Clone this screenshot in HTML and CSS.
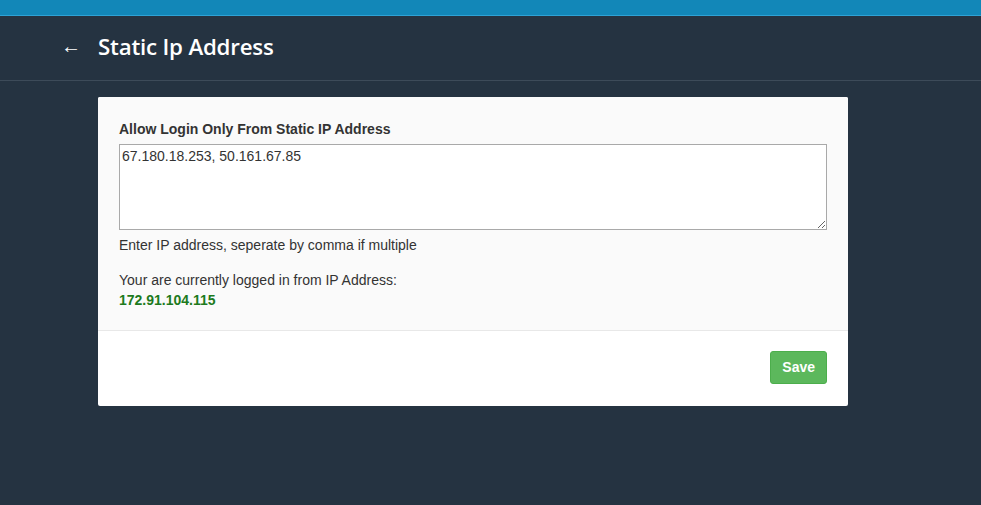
FILE: index.html
```html
<!DOCTYPE html>
<html lang="en">
<head>
    <meta charset="UTF-8">
    <meta name="viewport" content="width=device-width, initial-scale=1.0">
    <title>Static Ip Address</title>
    <link rel="stylesheet" href="styles.css">
</head>
<body>
    <div class="topbar"></div>
    <header class="page-header">
        <a class="back" href="#">&larr;</a>
        <h1>Static Ip Address</h1>
    </header>
    <form class="card" id="staticIpForm">
        <div class="card-body">
            <label for="ips">Allow Login Only From Static IP Address</label>
            <textarea id="ips" name="ips">67.180.18.253, 50.161.67.85</textarea>
            <p class="help">Enter IP address, seperate by comma if multiple</p>
            <p class="current">Your are currently logged in from IP Address:</p>
            <p class="current-ip">172.91.104.115</p>
        </div>
        <div class="card-footer">
            <button type="submit">Save</button>
        </div>
    </form>
</body>
</html>
```

FILE: styles.css
```css
body {
    margin: 0;
    background-color: #253341;
    font-family: "Liberation Sans", Arial, sans-serif;
    font-size: 14px;
    color: #333;
}
.topbar {
    height: 15px;
    background-color: #1287b8;
    border-bottom: 1px solid #2ea3d6;
}
.page-header {
    display: flex;
    align-items: center;
    height: 60px;
    padding: 0 0 4px 61px;
    border-bottom: 1px solid #3d4b59;
}
.back {
    color: #fff;
    text-decoration: none;
    font-size: 20px;
    font-weight: bold;
    width: 37px;
}
.page-header h1 {
    margin: 0;
    color: #fff;
    font-family: "Open Sans", sans-serif;
    font-weight: 600;
    font-size: 22.3px;
    letter-spacing: -0.2px;
}
.card {
    width: 750px;
    margin: 16px 0 0 98px;
    background-color: #fff;
    border-radius: 2px;
}
.card-body {
    background-color: #fafafa;
    padding: 20px 20px 20px 21px;
    border-bottom: 1px solid #e8e8e8;
    border-radius: 2px 2px 0 0;
}
.card-body label {
    display: block;
    font-weight: bold;
    line-height: 20px;
    margin-top: 2px;
    margin-bottom: 5px;
}
.card-body textarea {
    display: block;
    box-sizing: border-box;
    width: 708px;
    height: 86px;
    margin: 0;
    padding: 3px 2px;
    border: 1px solid #a9a9a9;
    font-family: "Liberation Sans", Arial, sans-serif;
    font-size: 14px;
    color: #333;
    background: #fff;
}
.card-body p {
    margin: 0;
    line-height: 20px;
}
.help {
    margin-top: 5px !important;
}
.current {
    margin-top: 15px !important;
}
.current-ip {
    color: #1d7a1d;
    font-weight: bold;
}
.card-footer {
    display: flex;
    justify-content: flex-end;
    padding: 20px 21px 22px 20px;
}
button {
    background-color: #5cb85c;
    color: #fff;
    font-family: "Liberation Sans", Arial, sans-serif;
    font-weight: bold;
    font-size: 14px;
    line-height: 19px;
    padding: 6px 11px;
    border: 1px solid #4cae4c;
    border-radius: 3px;
    cursor: pointer;
}
button:hover {
    background-color: #449d44;
}
```
